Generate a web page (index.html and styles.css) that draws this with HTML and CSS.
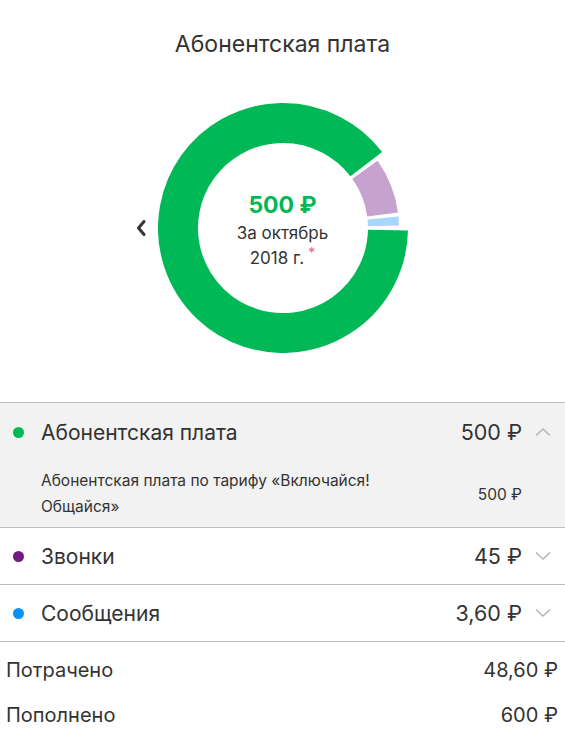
FILE: index.html
```html
<!DOCTYPE html>
<html lang="ru">
<head>
<meta charset="utf-8">
<link rel="stylesheet" href="styles.css">
</head>
<body>
<div class="page">
  <h1 class="title">Абонентская плата</h1>
  <div class="chart">
    <svg class="prev" width="12" height="18" viewBox="0 0 12 18"><path d="M9 2.5 L3.5 9 L9 15.5" fill="none" stroke="#333" stroke-width="3" stroke-linecap="round" stroke-linejoin="round"/></svg>
    <div class="donut">
      <svg width="250" height="250" viewBox="0 0 250 250">
        <path d="M229.98 127.20 A105 105 0 1 1 208.30 61.08" fill="none" stroke="#00b956" stroke-width="40"/>
        <path d="M206.92 66.78 A100.5 100.5 0 0 1 224.59 111.53" fill="none" stroke="#c6a3cf" stroke-width="31"/>
        <path d="M225.00 115.02 A100.5 100.5 0 0 1 225.48 122.90" fill="none" stroke="#a6d8fd" stroke-width="31"/>
      </svg>
      <div class="center">
        <div class="sum">500 ₽</div>
        <div class="period">За октябрь<br>2018 г.<sup class="star">*</sup></div>
      </div>
    </div>
    <div class="spacer"></div>
  </div>
  <div class="list">
    <div class="item open">
      <div class="row">
        <span class="dot green"></span>
        <span class="name">Абонентская плата</span>
        <span class="amount">500 ₽</span>
        <svg class="chev" width="16" height="10" viewBox="0 0 16 10"><path d="M1 8.5 L8 2 L15 8.5" fill="none" stroke="#b3b3b3" stroke-width="1.4"/></svg>
      </div>
      <div class="detail">
        <span class="dname">Абонентская плата по тарифу «Включайся! Общайся»</span>
        <span class="damount">500 ₽</span>
      </div>
    </div>
    <div class="item">
      <div class="row">
        <span class="dot purple"></span>
        <span class="name">Звонки</span>
        <span class="amount">45 ₽</span>
        <svg class="chev" width="16" height="10" viewBox="0 0 16 10"><path d="M1 1.5 L8 8 L15 1.5" fill="none" stroke="#b3b3b3" stroke-width="1.4"/></svg>
      </div>
    </div>
    <div class="item">
      <div class="row">
        <span class="dot blue"></span>
        <span class="name">Сообщения</span>
        <span class="amount">3,60 ₽</span>
        <svg class="chev" width="16" height="10" viewBox="0 0 16 10"><path d="M1 1.5 L8 8 L15 1.5" fill="none" stroke="#b3b3b3" stroke-width="1.4"/></svg>
      </div>
    </div>
  </div>
  <div class="totals">
    <div class="trow"><span>Потрачено</span><span>48,60 ₽</span></div>
    <div class="trow"><span>Пополнено</span><span>600 ₽</span></div>
  </div>
</div>
</body>
</html>
```
FILE: styles.css
```css
html, body {
  margin: 0;
  padding: 0;
  background: #fff;
}
body {
  font-family: Inter, "Noto Sans", sans-serif;
  color: #333;
}
.page {
  width: 565px;
}
.title {
  margin: 0;
  padding-top: 29px;
  height: 30px;
  font-size: 23px;
  line-height: 30px;
  font-weight: 400;
  text-align: center;
}
.chart {
  display: flex;
  justify-content: center;
  align-items: center;
  margin-top: 44px;
  height: 250px;
  gap: 11px;
}
.prev {
  display: block;
  width: 12px;
  height: 18px;
}
.spacer {
  width: 12px;
}
.donut {
  display: grid;
  width: 250px;
  height: 250px;
}
.donut svg,
.donut .center {
  grid-area: 1 / 1;
}
.center {
  display: flex;
  flex-direction: column;
  align-items: center;
  justify-content: center;
  text-align: center;
  padding-top: 6px;
}
.sum {
  font-size: 23px;
  font-weight: 700;
  color: #00b956;
  line-height: 28px;
}
.period {
  font-size: 17px;
  line-height: 25px;
  margin-top: 2px;
}
.star {
  color: #ee5a7a;
  font-size: 14px;
  vertical-align: top;
  line-height: 14px;
  margin-left: 4px;
}
.list {
  margin-top: 49px;
  border-top: 1px solid #bdbdbd;
}
.item {
  border-bottom: 1px solid #bdbdbd;
}
.item.open {
  background: #f2f2f2;
}
.row {
  display: flex;
  align-items: center;
  height: 56px;
  padding: 0 14px 0 13px;
}
.item.open .row {
  height: 58px;
}
.dot {
  width: 11px;
  height: 11px;
  border-radius: 50%;
  margin-right: 17px;
  flex: none;
}
.dot.green { background: #00b956; }
.dot.purple { background: #731982; }
.dot.blue { background: #0a91f5; }
.name {
  flex: 1;
  font-size: 21px;
}
.amount {
  font-size: 21.5px;
}
.chev {
  margin-left: 13px;
  display: block;
}
.detail {
  display: flex;
  align-items: center;
  padding: 7px 43px 7px 41px;
}
.dname {
  width: 360px;
  font-size: 15.5px;
  line-height: 26px;
}
.damount {
  margin-left: auto;
  font-size: 15.5px;
}
.totals {
  padding: 5px 7px 0 6px;
}
.trow {
  display: flex;
  justify-content: space-between;
  align-items: center;
  height: 45px;
  font-size: 20px;
}
```
